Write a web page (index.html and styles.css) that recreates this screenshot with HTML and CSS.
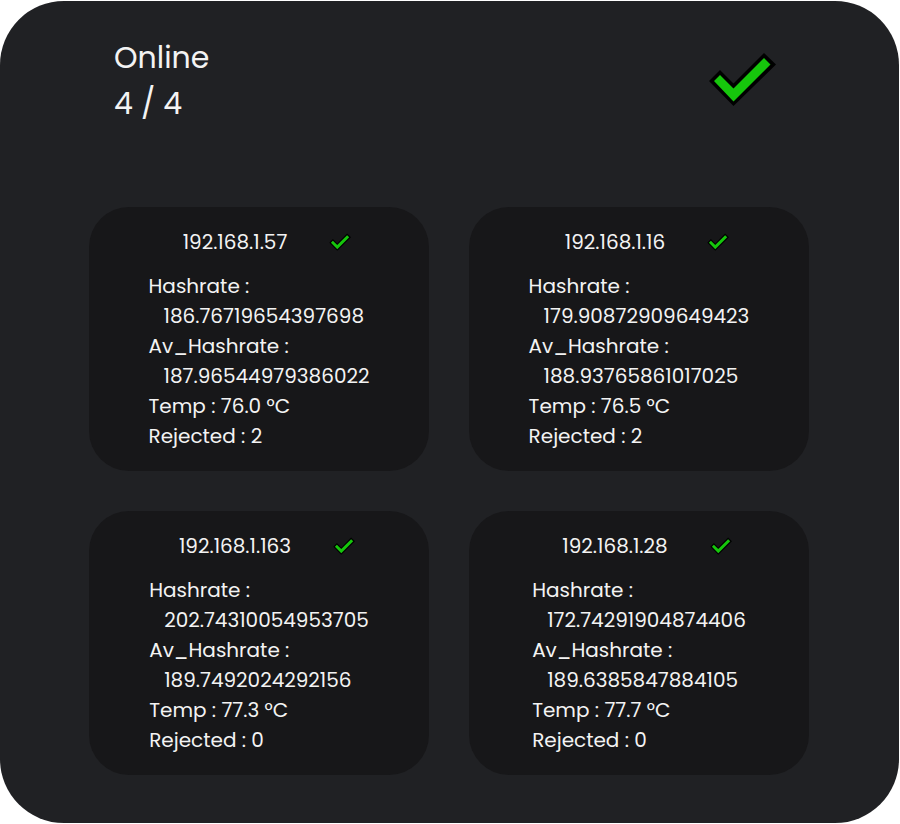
FILE: index.html
```html
<!DOCTYPE html>
<html lang="en">
<head>
<meta charset="utf-8">
<meta name="viewport" content="width=device-width, initial-scale=1">
<title>Miners online</title>
<link rel="stylesheet" href="styles.css">
</head>
<body>
<svg class="sprite" aria-hidden="true">
  <symbol id="check" viewBox="0 0 68 54">
    <path fill="#000" d="M1 29 12 18 25.500 31.500 56 1 68 12.500 25.500 54Z"/>
    <path fill="#16c60c" d="M6 29 12 23 25.500 36.500 56 6 62.500 12.500 25.500 49.500Z"/>
  </symbol>
</svg>
<main class="panel">
  <header class="summary">
    <h1 class="summary-text">Online<br>4 / 4</h1>
    <svg class="check-large" role="img" aria-label="All online"><use href="#check"/></svg>
  </header>
  <section class="miners">
    <article class="card">
      <div class="card-head"><h2 class="address">192.168.1.57</h2><svg class="check-small" role="img" aria-label="Online"><use href="#check"/></svg></div>
      <div class="stats">
        <p>Hashrate :</p><p class="value">186.76719654397698</p>
        <p>Av_Hashrate :</p><p class="value">187.96544979386022</p>
        <p>Temp : 76.0 °C</p><p>Rejected : 2</p>
      </div>
    </article>
    <article class="card">
      <div class="card-head"><h2 class="address">192.168.1.16</h2><svg class="check-small" role="img" aria-label="Online"><use href="#check"/></svg></div>
      <div class="stats">
        <p>Hashrate :</p><p class="value">179.90872909649423</p>
        <p>Av_Hashrate :</p><p class="value">188.93765861017025</p>
        <p>Temp : 76.5 °C</p><p>Rejected : 2</p>
      </div>
    </article>
    <article class="card">
      <div class="card-head"><h2 class="address">192.168.1.163</h2><svg class="check-small" role="img" aria-label="Online"><use href="#check"/></svg></div>
      <div class="stats">
        <p>Hashrate :</p><p class="value">202.74310054953705</p>
        <p>Av_Hashrate :</p><p class="value">189.7492024292156</p>
        <p>Temp : 77.3 °C</p><p>Rejected : 0</p>
      </div>
    </article>
    <article class="card">
      <div class="card-head"><h2 class="address">192.168.1.28</h2><svg class="check-small" role="img" aria-label="Online"><use href="#check"/></svg></div>
      <div class="stats">
        <p>Hashrate :</p><p class="value">172.74291904874406</p>
        <p>Av_Hashrate :</p><p class="value">189.6385847884105</p>
        <p>Temp : 77.7 °C</p><p>Rejected : 0</p>
      </div>
    </article>
  </section>
</main>
</body>
</html>
```
FILE: styles.css
```css
* { box-sizing: border-box; }

body {
  margin: 0;
  background: #fff;
  color: #f3f3f3;
  font: 20px/30px Poppins, "Open Sans", sans-serif;
}

h1, h2, p { margin: 0; font-weight: 400; }

.sprite { position: absolute; width: 0; height: 0; }

.panel {
  margin: 1px 1px 1px 0;
  padding: 34px 90px 48px 89px;
  border-radius: 64px;
  background: #202124;
}

.summary {
  display: flex;
  justify-content: space-between;
  align-items: flex-start;
  padding: 0 33px 0 25px;
}

.summary-text { font-size: 30px; line-height: 46px; }

.check-large { width: 68px; height: 54px; margin-top: 17px; }

.miners {
  display: grid;
  grid-template-columns: repeat(auto-fit, minmax(300px, 1fr));
  gap: 40px;
  margin-top: 80px;
}

.card {
  padding: 20px;
  border-radius: 40px;
  background: #171719;
}

.card-head {
  display: flex;
  justify-content: center;
  align-items: center;
  gap: 42px;
  padding-left: 16px;
  margin-bottom: 14px;
}

.address { font-size: 20px; line-height: 30px; }

.check-small { width: 22px; height: 18px; }

.stats { width: fit-content; margin: 0 auto; }

.value { padding-left: 15px; }
```
